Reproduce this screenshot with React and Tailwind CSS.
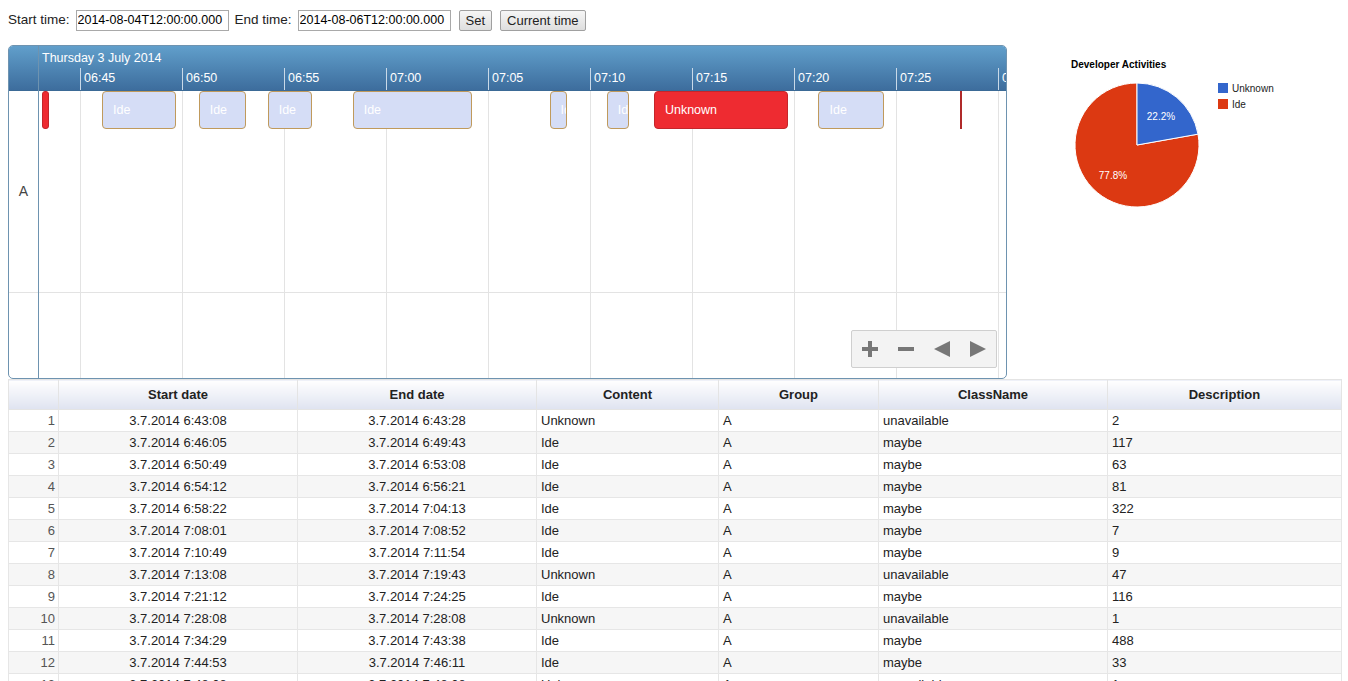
import React from 'react';

const rows = [
  ['6:43:08', '6:43:28', 'Unknown', 'unavailable', '2'],
  ['6:46:05', '6:49:43', 'Ide', 'maybe', '117'],
  ['6:50:49', '6:53:08', 'Ide', 'maybe', '63'],
  ['6:54:12', '6:56:21', 'Ide', 'maybe', '81'],
  ['6:58:22', '7:04:13', 'Ide', 'maybe', '322'],
  ['7:08:01', '7:08:52', 'Ide', 'maybe', '7'],
  ['7:10:49', '7:11:54', 'Ide', 'maybe', '9'],
  ['7:13:08', '7:19:43', 'Unknown', 'unavailable', '47'],
  ['7:21:12', '7:24:25', 'Ide', 'maybe', '116'],
  ['7:28:08', '7:28:08', 'Unknown', 'unavailable', '1'],
  ['7:34:29', '7:43:38', 'Ide', 'maybe', '488'],
  ['7:44:53', '7:46:11', 'Ide', 'maybe', '33'],
  ['7:48:08', '7:48:08', 'Unknown', 'unavailable', '1'],
];

const ticks = ['06:45', '06:50', '06:55', '07:00', '07:05', '07:10', '07:15', '07:20', '07:25', '07:30'];

// 102px per 5 minutes, 06:45 sits 41px into the content area
const toSec = (t) => {
  const [h, m, s] = t.split(':').map(Number);
  return h * 3600 + m * 60 + s;
};
const BASE = toSec('6:45:00');
const xOf = (t) => 41 + (toSec(t) - BASE) * 0.34;

const btn = 'h-[21px] border border-[#a0a0a0] rounded-[2px] bg-gradient-to-b from-[#f6f6f6] to-[#dedede] text-[13px] px-[6px]';
const field = 'w-[153px] h-[21px] border border-[#a9a9a9] px-[1px] text-[12.5px] text-black';

function TopBar() {
  return (
    <div className="flex items-center gap-[6px] h-[40px] pl-2 text-[13.5px] text-[#222]">
      <span>Start time:</span>
      <input readOnly value="2014-08-04T12:00:00.000" className={field} />
      <span>End time:</span>
      <input readOnly value="2014-08-06T12:00:00.000" className={field} />
      <div className="flex gap-[8px] ml-[2px]">
        <button className={btn}>Set</button>
        <button className={btn}>Current time</button>
      </div>
    </div>
  );
}

function NavButtons() {
  return (
    <div className="absolute left-[812px] top-[239px] w-[146px] h-[38px] border border-[#cfcfcf] rounded-[2px] bg-[#f3f3f3]">
      <svg width="144" height="36" viewBox="0 0 144 36">
        <rect x="10" y="16" width="16" height="4" fill="#777" />
        <rect x="16" y="10" width="4" height="16" fill="#777" />
        <rect x="46" y="16" width="16" height="4" fill="#777" />
        <polygon points="82,18 98,10 98,26" fill="#777" />
        <polygon points="134,18 118,10 118,26" fill="#777" />
      </svg>
    </div>
  );
}

function Timeline() {
  const hdr = 'h-[45px] bg-gradient-to-b from-[#619fcb] to-[#3d6d9d] border-b border-[#3b6a96]';
  return (
    <div className="ml-2 mt-[5px] w-[999px] h-[334px] border border-[#6e93b0] rounded-[5px] overflow-hidden bg-white flex">
      {/* group column */}
      <div className="w-[30px] flex flex-col border-r border-[#6e93b0]">
        <div className={hdr} />
        <div className="h-[202px] border-b border-[#e3e3e3] flex items-center justify-center text-[14px] text-[#444]">A</div>
      </div>
      {/* content */}
      <div className="flex-1 flex flex-col overflow-hidden">
        <div className={hdr + ' flex flex-col'}>
          <div className="pl-[3px] pt-[5px] h-[22px] text-[12.5px] leading-[15px] text-white whitespace-nowrap">Thursday 3 July 2014</div>
          <div className="flex pl-[41px] h-[22px]">
            {ticks.map((t) => (
              <div key={t} className="w-[102px] shrink-0 border-l border-[#c9d9e8] pl-[3px] pt-[3px] text-[12.5px] leading-[15px] text-white">
                {t}
              </div>
            ))}
          </div>
        </div>
        <div className="relative flex-1">
          {/* grid */}
          <div className="absolute inset-0 flex pl-[41px]">
            {ticks.map((t) => (
              <div key={t} className="w-[102px] shrink-0 border-l border-[#e3e3e3]" />
            ))}
          </div>
          <div className="absolute left-0 right-0 top-[201px] border-t border-[#e3e3e3]" />
          {/* items */}
          {rows.map((r, i) => {
            const left = xOf(r[0]);
            const unknown = r[2] === 'Unknown';
            if (r[0] === r[1]) {
              return <div key={i} className="absolute top-0 h-[38px] w-[2px] bg-[#b02a2a]" style={{ left: left }} />;
            }
            const w = Math.max(xOf(r[1]) - xOf(r[0]), 6);
            const narrow = w < 12;
            return (
              <div
                key={i}
                className={
                  'absolute top-0 h-[38px] border overflow-hidden whitespace-nowrap text-[12.5px] text-white flex items-center ' +
                  (narrow ? 'rounded-[3px] ' : 'rounded-[4px] pl-[10px] ') +
                  (unknown ? 'bg-[#ee2b31] border-[#c4262b]' : 'bg-[#d5ddf6] border-[#c09a5c]')
                }
                style={{ left: left, width: w }}
              >
                {narrow ? '' : r[2]}
              </div>
            );
          })}
          <NavButtons />
        </div>
      </div>
    </div>
  );
}

function PieChart() {
  const cx = 97, cy = 100, r = 62;
  const a = 0.222 * Math.PI * 2;
  const ex = cx + r * Math.sin(a);
  const ey = cy - r * Math.cos(a);
  return (
    <svg width="300" height="210" viewBox="0 0 300 210" className="ml-[33px] mt-[5px]" style={{ fontFamily: 'Arial, "Liberation Sans", sans-serif' }}>
      <text x="31" y="23" fontSize="10" fontWeight="bold" fill="#000">Developer Activities</text>
      <path d={`M${cx},${cy} L${ex},${ey} A${r},${r} 0 1,1 ${cx},${cy - r} Z`} fill="#dc3912" stroke="#fff" strokeWidth="1" />
      <path d={`M${cx},${cy} L${cx},${cy - r} A${r},${r} 0 0,1 ${ex},${ey} Z`} fill="#3366cc" stroke="#fff" strokeWidth="1" />
      <text x="121" y="75" fontSize="10" fill="#fff" textAnchor="middle">22.2%</text>
      <text x="73" y="134" fontSize="10" fill="#fff" textAnchor="middle">77.8%</text>
      <rect x="178" y="38" width="10" height="10" fill="#3366cc" />
      <text x="192" y="47" fontSize="10" fill="#222">Unknown</text>
      <rect x="178" y="54" width="10" height="10" fill="#dc3912" />
      <text x="192" y="63" fontSize="10" fill="#222">Ide</text>
    </svg>
  );
}

function DataTable() {
  const head = 'border border-[#e4e4e4] font-bold text-[13px] text-[#222] bg-gradient-to-b from-[#ffffff] to-[#dfe3f0] h-[30px] text-center';
  const cell = 'border border-[#e6e6e6] h-[22px] px-[4px] text-[13px] text-[#222] whitespace-nowrap';
  return (
    <table className="ml-2 border-collapse table-fixed w-[1333px]">
      <colgroup>
        <col className="w-[50px]" />
        <col className="w-[239px]" />
        <col className="w-[239px]" />
        <col className="w-[182px]" />
        <col className="w-[160px]" />
        <col className="w-[229px]" />
        <col className="w-[234px]" />
      </colgroup>
      <thead>
        <tr>
          <th className={head}></th>
          <th className={head}>Start date</th>
          <th className={head}>End date</th>
          <th className={head}>Content</th>
          <th className={head}>Group</th>
          <th className={head}>ClassName</th>
          <th className={head}>Description</th>
        </tr>
      </thead>
      <tbody>
        {rows.map((r, i) => (
          <tr key={i} className={i % 2 === 1 ? 'bg-[#f6f6f6]' : 'bg-white'}>
            <td className={cell + ' text-right pr-[3px] text-[#555]'}>{i + 1}</td>
            <td className={cell + ' text-center'}>3.7.2014 {r[0]}</td>
            <td className={cell + ' text-center'}>3.7.2014 {r[1]}</td>
            <td className={cell}>{r[2]}</td>
            <td className={cell}>A</td>
            <td className={cell}>{r[3]}</td>
            <td className={cell}>{r[4]}</td>
          </tr>
        ))}
      </tbody>
    </table>
  );
}

export default function App() {
  return (
    <div className="w-[1348px] h-[681px] overflow-hidden bg-white font-['Liberation_Sans',Arial,sans-serif]">
      <TopBar />
      <div className="flex">
        <Timeline />
        <PieChart />
      </div>
      <DataTable />
    </div>
  );
}
